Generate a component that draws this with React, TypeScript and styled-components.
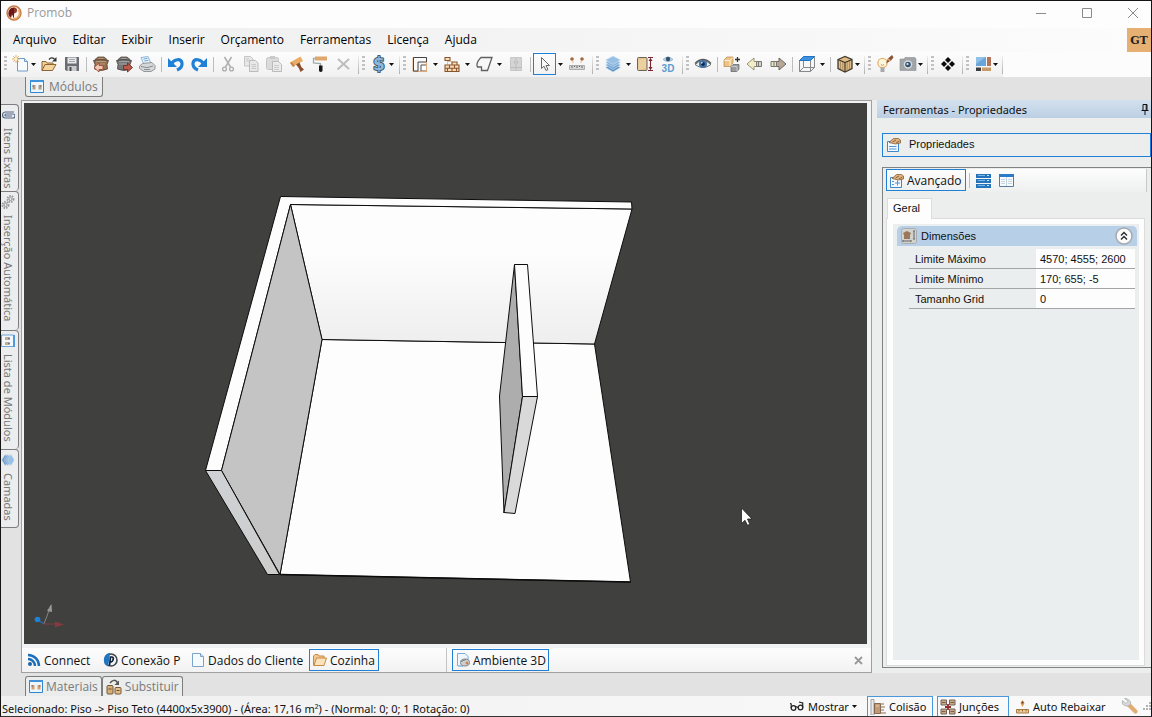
import React from "react";
import styled, { createGlobalStyle, css } from "styled-components";

const GlobalStyle = createGlobalStyle`
  * { box-sizing: border-box; }
  body { margin: 0; background: #e2e2e2; }
  body, button, input { font-family: "Open Sans", "Noto Sans", sans-serif; font-size: 12px; color: #111; }
  button { margin: 0; padding: 0; border: 0; background: none; white-space: nowrap; }
  svg { display: block; flex: none; }
`;

const BLUE = "#1f80d6";

const Window = styled.div`
  display: flex;
  flex-direction: column;
  min-height: 100vh;
  border: 1px solid #141414;
  border-bottom-color: #333;
  background: #e2e2e2;
`;

const TitleBar = styled.header`
  display: flex;
  align-items: center;
  height: 27px;
  padding: 0 8px 4px 5px;
  background: #fdfdfd;
`;
const Title = styled.h1`
  flex: 1;
  margin: 0 0 0 5px;
  font-size: 12px;
  font-weight: 400;
  color: #9a9a9a;
`;
const WindowButtons = styled.div`
  display: flex;
  gap: 26px;
`;
const WindowButton = styled.button`
  display: flex;
  align-items: center;
  justify-content: center;
  width: 20px;
  height: 20px;
`;

const MenuBar = styled.nav`
  display: flex;
  height: 24px;
  padding-left: 4px;
  background: linear-gradient(90deg, #eeefef, #f3f3f3 40%, #fcfcfc);
`;
const MenuItem = styled.button`
  padding: 0 8px;
  line-height: 24px;
  color: #000;
`;
const Badge = styled.button`
  width: 24px;
  margin-left: auto;
  background: #e6b073;
  font-family: "DejaVu Serif", serif;
  font-size: 11px;
  font-weight: 700;
  color: #222;
`;

const ToolBar = styled.div`
  display: flex;
  height: 25px;
  background: #fcfcfc;
`;
const ToolGroup = styled.div<{ $tight?: boolean }>`
  position: relative;
  display: flex;
  align-items: flex-start;
  padding: 1px ${(p) => (p.$tight ? 4 : 5)}px 0 0;
  background: linear-gradient(#fdfdfd, #f0f0f0);
  &::after {
    content: "";
    position: absolute;
    right: 0;
    top: 4px;
    bottom: 3px;
    width: 1px;
    background: linear-gradient(#eee, #b0b0b0);
  }
`;
const Grip = styled.span`
  width: 3px;
  height: 15px;
  margin: 3px 2px 0 3px;
  background: repeating-linear-gradient(#c0c0c0 0 2px, transparent 2px 4px);
`;
const ToolButton = styled.button<{ $active?: boolean; $faded?: boolean }>`
  display: flex;
  align-items: center;
  justify-content: center;
  width: 23px;
  height: 22px;
  opacity: ${(p) => (p.$faded ? 0.75 : 1)};
  ${(p) => p.$active && css`box-shadow: inset 0 0 0 1px ${BLUE};`}
`;
const DropButton = styled.button<{ $overlap?: boolean }>`
  display: flex;
  align-items: center;
  justify-content: center;
  width: ${(p) => (p.$overlap ? 8 : 9)}px;
  height: 22px;
  margin-left: ${(p) => (p.$overlap ? -3 : 0)}px;
`;
const Divider = styled.span`
  width: 1px;
  height: 15px;
  margin: 4px 2px 0 3px;
  background: #bdbdbd;
`;

const TabStrip = styled.div<{ $bottom?: boolean }>`
  display: flex;
  height: 23px;
  padding: ${(p) => (p.$bottom ? "3px 0 0 24px" : "0 0 3px 24px")};
`;
const EdgeTab = styled.button<{ $bottom?: boolean }>`
  display: flex;
  align-items: center;
  gap: ${(p) => (p.$bottom ? 3 : 5)}px;
  height: 20px;
  padding: 0 ${(p) => (p.$bottom ? 3 : 4)}px;
  border: 1px solid #7d7d7d;
  background: #ebecec;
  color: #7a7a7a;
  ${(p) =>
    p.$bottom
      ? css`border-bottom: 0; border-radius: 3px 3px 0 0;`
      : css`border-top: 0; border-radius: 0 0 3px 3px;`}
`;

const Body = styled.div`
  display: flex;
  flex: 1;
  min-height: 0;
`;
const SideTabs = styled.div`
  width: 20px;
  padding-top: 4px;
`;
const SideTab = styled.button<{ $length: number }>`
  display: flex;
  align-items: center;
  gap: 6px;
  writing-mode: vertical-rl;
  width: 18px;
  height: ${(p) => p.$length}px;
  padding: 3px 3px 3px 0;
  border: 1px solid #7d7d7d;
  border-left: 0;
  border-bottom-width: 0;
  border-radius: 0 4px 4px 0;
  background: #ecedee;
  font-family: "Noto Sans", sans-serif;
  font-size: 11px;
  line-height: 14px;
  color: #777;
  &:last-child { border-bottom-width: 1px; }
`;

const Workspace = styled.main`
  display: flex;
  flex: 1;
  flex-direction: column;
  min-width: 0;
  border: 1px solid #a0a0a2;
  background: #f1f2f3;
  padding: 2px 4px 0 2px;
`;
const Viewport = styled.div`
  flex: 1;
  min-height: 0;
  overflow: hidden;
  background: #40403e;
  & > svg { width: 100%; height: 100%; }
`;
const ViewBar = styled.div`
  display: flex;
  height: 24px;
  margin: 4px -4px 0 -2px;
  background: linear-gradient(#fdfdfd, #f2f2f2);
`;
const ViewGroup = styled.div<{ $grow?: boolean }>`
  display: flex;
  align-items: center;
  flex: ${(p) => (p.$grow ? "1" : "0 0 425px")};
  padding: 0 4px 0 5px;
  border-right: 1px solid ${(p) => (p.$grow ? "transparent" : "#c4c4c4")};
`;
const ViewButton = styled.button<{ $active?: boolean; $width: number }>`
  display: flex;
  align-items: center;
  gap: 3px;
  width: ${(p) => p.$width}px;
  height: 22px;
  padding-left: ${(p) => (p.$active ? 3 : 0)}px;
  border: ${(p) => (p.$active ? `1px solid ${BLUE}` : "0")};
`;
const CloseView = styled.button`
  margin-left: auto;
  padding: 4px 3px;
`;

const Panel = styled.aside`
  display: flex;
  flex-direction: column;
  width: 279px;
  padding: 0 0 5px 5px;
  background: #eceeee;
  & button, & input, & label, & h3 { font-family: "Liberation Sans", sans-serif; font-size: 11px; }
`;
const PanelHeader = styled.div`
  display: flex;
  align-items: center;
  justify-content: space-between;
  height: 18px;
  padding: 0 2px 0 6px;
  background: linear-gradient(#d3e1ee, #bccfe3);
`;
const PanelTitle = styled.h2`
  margin: 0;
  font-family: "Noto Sans", sans-serif;
  font-size: 11px;
  font-weight: 400;
`;
const PropertiesButton = styled.button`
  display: flex;
  align-items: center;
  gap: 8px;
  height: 24px;
  margin: 15px 0 10px 5px;
  padding: 0 3px 2px;
  border: 1px solid ${BLUE};
`;
const PropertyBox = styled.section`
  display: flex;
  flex: 1;
  flex-direction: column;
  margin-left: 5px;
  padding: 1px 4px 1px 3px;
  border: 1px solid #828282;
  border-right: 0;
`;
const PropertyTools = styled.div`
  display: flex;
  height: 23px;
  border-right: 1px solid #c8c8c8;
  background: linear-gradient(#fdfdfd, #eeefef);
`;
const AdvancedButton = styled.button`
  display: flex;
  align-items: center;
  gap: 3px;
  width: 80px;
  height: 22px;
  padding-left: 2px;
  border: 1px solid ${BLUE};
  && { font-family: "Open Sans", "Noto Sans", sans-serif; font-size: 12px; }
`;
const PageTab = styled.button`
  position: relative;
  align-self: flex-start;
  width: 45px;
  height: 21px;
  margin: 6px 0 -1px 1px;
  border: 1px solid #dcdcdc;
  border-bottom: 0;
  background: #fdfdfd;
  padding: 0 6px 2px 0;
`;
const Page = styled.div`
  flex: 1;
  margin-right: 2px;
  padding: 5px 5px 5px 6px;
  border: 1px solid #dcdcdc;
  background: #fdfdfd;
  & > div { height: 100%; padding: 2px 2px 0 4px; background: #ebeeee; }
`;
const SectionHeader = styled.div`
  display: flex;
  align-items: center;
  gap: 4px;
  height: 20px;
  padding: 0 4px;
  border-radius: 5px 5px 0 0;
  background: #b8cfe8;
`;
const SectionTitle = styled.h3`
  flex: 1;
  margin: 0;
  font-weight: 400;
`;
const PropertyRow = styled.div`
  display: flex;
  align-items: center;
  height: 20px;
  margin: 0 2px 0 12px;
  padding-left: 6px;
  border-bottom: 1px solid #a3a5a5;
  & label { flex: 1; }
`;
const PropertyInput = styled.input`
  width: 99px;
  height: 19px;
  padding: 0 4px;
  border: 0;
  background: #fdfdfd;
`;
const Rows = styled.div`
  padding-top: 3px;
`;

const StatusBar = styled.footer`
  display: flex;
  align-items: center;
  height: 20px;
  background: linear-gradient(90deg, #f0f0f0, #fafafa);
`;
const StatusText = styled.div`
  flex: 1;
  font-family: "Noto Sans", sans-serif;
  font-size: 11px;
  padding: 4px 0 0 1px;
  white-space: nowrap;
`;
const StatusButton = styled.button<{ $active?: boolean; $width: number }>`
  display: flex;
  align-items: center;
  gap: 3px;
  width: ${(p) => p.$width}px;
  height: 20px;
  margin-right: 4px;
  padding-left: 2px;
  font-family: "Noto Sans", sans-serif;
  font-size: 11px;
  ${(p) => p.$active && css`border: 1px solid #4a98dc; border-bottom: 0;`}
`;

const Ico = ({ children, size = 18, h }: { children: React.ReactNode; size?: number; h?: number }) => (
  <svg width={size} height={h ?? size} viewBox={`0 0 ${size} ${h ?? size}`} fill="none" aria-hidden="true">
    {children}
  </svg>
);

const Arrow = () => (
  <Ico size={5} h={3}><path d="M0 0h5L2.500 3z" fill="#111" /></Ico>
);

const Logo = () => (
  <Ico size={16}>
    <circle cx="8" cy="8" r="6.900" fill="#fff4e8" stroke="#c77b45" strokeWidth="1.500" />
    <path d="M8.500 2.500A5.600 5.600 0 0 0 5 12.800q.5-1.500 1-3.500L8 14V9z" fill="#6b1717" />
    <path d="M8 2.500q3 0 3 2.800T8 8.500z" fill="#8b3a2c" />
    <path d="M8 13.800a5.700 5.700 0 0 0 4.500-9" stroke="#e5a76a" strokeWidth="1.600" />
  </Ico>
);

const NewIcon = () => (
  <Ico>
    <path d="M5.500 3.500h7l3 3v9.500h-10z" fill="#f8fbfe" stroke="#6f9cc6" />
    <path d="M12.500 3.500v3h3" stroke="#6f9cc6" fill="#d8e8f6" />
    <path d="M4 0v8M0 4h8M1.200 1.200l5.600 5.600M6.800 1.200L1.200 6.800" stroke="#e0a95c" strokeWidth=".900" />
    <circle cx="4" cy="4" r="1.500" fill="#fff3cd" />
  </Ico>
);
const OpenIcon = () => (
  <Ico>
    <path d="M2 15.500V6.500h4l1 1.500h6v2" fill="#f3cf98" stroke="#8c6535" />
    <path d="M2 15.500l3-6h11l-3.500 6z" fill="#f6d39c" stroke="#8c6535" />
    <path d="M9 4.500q2.500-3 5.500-.5" stroke="#333" strokeWidth="1.300" />
    <path d="M16.500 2v4.500H12z" fill="#333" />
  </Ico>
);
const SaveIcon = () => (
  <Ico>
    <path d="M2 2h14v14H3.500L2 14.500z" fill="#6a6e72" />
    <path d="M4.500 2.500h9v6h-9z" fill="#e9ebec" />
    <path d="M6 4.500h6M6 6.500h6" stroke="#a0a4a7" />
    <path d="M4.500 11h9v5h-9z" fill="#c7cbce" />
    <path d="M6.500 12h2v4h-2z" fill="#4b4e51" />
  </Ico>
);
const ModuleIcon = ({ base, right }: { base: string; right?: boolean }) => (
  <Ico>
    <path d="M3 4.500l3-2.500h6l3 2.500v3H3z" fill={base} stroke="#4c3a2c" strokeWidth=".700" />
    <path d="M1.500 5.500q7.500-2 15 0l-1.500 4 .5 4.500q-6.500 3-13 0L3 9.500z" fill={base} stroke="#4a4038" strokeWidth=".800" />
    <path d="M4 6.500h10M6.500 3.500h5M4 9h9" stroke="#fff" strokeOpacity=".3" />
    <path d={right ? "M8.500 10.500h4V8l5 4.500-5 4.500v-2.500h-4z" : "M11 10.500H7V8L2 12.500 7 17v-2.500h4z"} fill={right ? "#b85a4c" : "#f1c9b3"} stroke={right ? "#7b2a22" : "#a04a38"} strokeWidth=".900" />
  </Ico>
);
const PrintIcon = () => (
  <Ico>
    <path d="M3 2.500l7-1 3 7-7 1z" fill="#e9f3fc" stroke="#8eb8da" />
    <path d="M5.500 4l4-.6M6.300 6l4-.6" stroke="#6ea7d7" />
    <path d="M1.500 11l3-2.500 9.500-1 3 3v3.500l-4 2.500h-7l-4.500-3z" fill="#d5d7d9" stroke="#94979a" />
    <path d="M3 11.500q6 2.500 12-.5M6 14.500h6" stroke="#8b8e91" />
  </Ico>
);
const UndoIcon = ({ flip }: { flip?: boolean }) => (
  <Ico>
    <g transform={flip ? "translate(18 0) scale(-1 1)" : undefined}>
      <path d="M4.500 9C7 4 14 3 15 8c.5 3-1.500 5.500-5 7" stroke="#1f80d6" strokeWidth="3.200" />
      <path d="M1 3v9h9z" fill="#1f80d6" />
    </g>
  </Ico>
);
const CutIcon = () => (
  <Ico>
    <path d="M5.500 2l6 10M12.500 2l-6 10" stroke="#b0b0b0" strokeWidth="1.600" />
    <circle cx="5.500" cy="14" r="1.900" stroke="#ababab" strokeWidth="1.300" />
    <circle cx="12.500" cy="14" r="1.900" stroke="#ababab" strokeWidth="1.300" />
  </Ico>
);
const CopyIcon = () => (
  <Ico>
    <path d="M2.500 1.500h6l2.500 2.500v7H2.500z" fill="#e3e3e3" stroke="#b4b4b4" />
    <path d="M7.500 5.500h6L16 8v8.500H7.500z" fill="#e3e3e3" stroke="#a8a8a8" />
    <path d="M9.500 9.500h4.500M9.500 11.500h4.500M9.500 13.500h4.500M4 4h3M4 6h3" stroke="#b9b9b9" />
  </Ico>
);
const PasteIcon = () => (
  <Ico>
    <rect x="1.500" y="2.500" width="12" height="12" rx="2" fill="#d2d2d2" stroke="#b4b4b4" />
    <path d="M5 1h5v3H5z" fill="#bbb" />
    <path d="M7.500 6.500h6l3 3v7h-9z" fill="#e8e8e8" stroke="#a8a8a8" />
    <path d="M9 10.500h5M9 12.500h5M9 14.500h5" stroke="#bdbdbd" />
  </Ico>
);
const HammerIcon = () => (
  <Ico>
    <path d="M2 7.500L12.500 1.500l2.500 4.500-10 5.500z" fill="#e9ad66" />
    <path d="M2 8l3 4 2-1-3-4z" fill="#c98646" />
    <path d="M8 9.500l3.500-2q1 4.500 4.500 7l-3.500 2.500q-1-4-4.500-7.500z" fill="#8b4d2e" />
  </Ico>
);
const RollerIcon = () => (
  <Ico>
    <path d="M4 1.500h12v4H4z" fill="#e0a76c" />
    <path d="M4 3.500H2.500V8l7 .5v3" stroke="#9aabb0" strokeWidth="1.300" />
    <path d="M8 10.500h3.500V16q-1.700 2-3.500 0z" fill="#161616" />
  </Ico>
);
const DeleteIcon = () => (
  <Ico><path d="M4 4l11 10M3.500 14.500L15 4" stroke="#bbb" strokeWidth="1.800" /></Ico>
);
const DollarIcon = () => (
  <svg width="20" height="18" viewBox="0 0 18 18" aria-hidden="true">
    <text x="9" y="15" textAnchor="middle" fontFamily="DejaVu Sans, sans-serif" fontWeight="700" fontSize="17" fill="#8db8d9" stroke="#435766" strokeWidth="2" strokeLinejoin="round" paintOrder="stroke">$</text>
  </svg>
);
const WallIcon = () => (
  <Ico>
    <path d="M2 2.500h13.500v14H2z" stroke="#e2a979" />
    <path d="M2.500 2.500h13v4.500H7v9H2.500z" stroke="#444" fill="#fafafa" />
    <path d="M10 10h5.500v6H10z" fill="#fff" stroke="#555" />
    <path d="M7 16.500h8.500V7" stroke="#e2a979" />
  </Ico>
);
const BrickIcon = () => (
  <Ico>
    <path d="M2 2.500h5v3H2zM2 10h14v6.500H2zM2 13.200h14M6.500 10v3M11.500 10v3M4.500 13v3.500M9 13v3.500M13.500 13v3.500M9 7h5v3H9z" fill="#f6dcb8" stroke="#8a552e" strokeWidth="1.100" />
    <path d="M4.500 6.500h4.500v3.500h-4.500z" stroke="#b88b5e" strokeDasharray="1 1" />
  </Ico>
);
const PolygonIcon = () => (
  <Ico><path d="M6 2.500h11l-4.500 13H6.500v-3.500H2.500q-2-4 3.500-9.500z" fill="#f7f7f7" stroke="#606060" strokeWidth="1.300" /></Ico>
);
const CabinetIcon = () => (
  <Ico>
    <path d="M3.500 2.500h11v13h-11z" fill="#c9c9c9" stroke="#b8b8b8" />
    <path d="M9 2.500v13M3.500 12.500h11M7.500 6v2.500M10.500 6v2.500" stroke="#aaa" />
  </Ico>
);
const PointerIcon = () => (
  <Ico><path d="M5.500 2.500v11l2.500-2.300 2 4.300 2-1-2-4h3.500z" fill="#f9f9f9" stroke="#666" /></Ico>
);
const MeasureIcon = () => (
  <Ico>
    <path d="M1.500 10.500h15v4h-15z" fill="#d6d6d6" stroke="#acacac" />
    <path d="M4 11v2M6.500 11v1M9 11v2M11.500 11v1M14 11v2" stroke="#666" />
    <circle cx="4" cy="4" r="1.800" fill="#a2683d" /><circle cx="14" cy="4" r="1.800" fill="#a2683d" />
    <path d="M5.500 7H4M14 7h-1.500" stroke="#d9a66b" />
  </Ico>
);
const LayersIcon = ({ size = 18, sideways }: { size?: number; sideways?: boolean }) => (
  <svg width={size} height={size} viewBox="0 0 18 18" aria-hidden="true">
    <g transform={sideways ? "rotate(90 9 9)" : undefined}>
      {[12.500, 10, 7.500, 5].map((y, i) => (
        <path key={y} d={`M9 ${y - 4}l7.500 4-7.500 4.500-7.500-4.500z`} fill={["#5d93c6", "#74a5d3", "#88b5dc", "#97c0e4"][i]} stroke="#d4e5f4" strokeWidth=".600" />
      ))}
    </g>
  </svg>
);
const HeightIcon = () => (
  <Ico>
    <rect x="1.500" y="2.500" width="9.500" height="13" rx="1" fill="#e6c393" stroke="#68645c" />
    <path d="M2.500 5l7.500-1.500V13l-7.500 2z" fill="#f0d9a7" fillOpacity=".6" />
    <path d="M12 2.500h5M12 15.500h5M14.500 3.500v11" stroke="#7d2632" strokeWidth="1.100" />
    <path d="M14.500 3l2 3h-4zM14.500 15l2-3h-4z" fill="#7d2632" />
  </Ico>
);
const Eye3DIcon = () => (
  <svg width="18" height="18" viewBox="0 0 18 18" aria-hidden="true">
    <path d="M4 4.500Q9-.5 14 4.500 9 8.500 4 4.500z" fill="#bfd5e6" stroke="#7fa3be" strokeWidth=".700" />
    <circle cx="9" cy="4" r="2.200" fill="#33546f" />
    <text x="9" y="17" textAnchor="middle" fontFamily="Liberation Sans, sans-serif" fontWeight="700" fontSize="10" fill="#5f9ccf">3D</text>
  </svg>
);
const EyeIcon = () => (
  <Ico>
    <path d="M1 9.500Q9 2 17 9.500 9 15.500 1 9.500z" fill="#eef1f3" stroke="#6b747c" />
    <path d="M1 8.500Q9 .5 17 8.500" stroke="#5a5a5a" strokeWidth="1.400" />
    <circle cx="9" cy="9" r="4" fill="#3f72a8" /><circle cx="9" cy="9" r="1.800" fill="#142133" />
    <circle cx="7.800" cy="7.800" r=".900" fill="#cfe2f2" />
  </Ico>
);
const CopyBoxIcon = () => (
  <Ico>
    <path d="M1 5l3-3h6v6l-2 1.500-.5 2H1z" fill="#edc386" stroke="#b88746" strokeWidth=".700" />
    <path d="M1.500 5.500h5.500V11M7 5.500l3-3" stroke="#fff3da" />
    <path d="M8 11.500l2-2h6v4.500L14 16.500H8z" fill="#9a9b9d" stroke="#5f6062" strokeWidth=".700" />
    <path d="M8.500 11.500h5.500v5" stroke="#c8c9ca" />
    <path d="M14.500 2v5M12 4.500h5" stroke="#333" strokeWidth="1.300" />
  </Ico>
);
const BackIcon = () => (
  <Ico>
    <path d="M1 9l7-6v3.500h3v5H8V15z" fill="#f3efca" stroke="#9b9472" />
    <path d="M10.500 6.500h5v5h-5z" fill="#d9d3bd" stroke="#777" /><path d="M12.500 7v4" stroke="#777" />
  </Ico>
);
const ForwardIcon = () => (
  <Ico>
    <path d="M17 9l-7-6v3.500H7v5h3V15z" fill="#b9a796" stroke="#6f655e" />
    <path d="M2 6.500h5.500v5H2z" fill="#e8e5b9" stroke="#777" /><path d="M5 7v4" stroke="#777" />
  </Ico>
);
const FrameIcon = () => (
  <Ico>
    <path d="M1.500 5.500h11v11h-11zM12.500 5.500l4-4v11l-4 4M5.500 2v10.500h11M5.500 12.500l-4 4" stroke="#85898c" />
    <path d="M1.500 5.500l4-4h11l-4 4z" fill="#3f93de" stroke="#2175c4" />
  </Ico>
);
const CrateIcon = () => (
  <Ico>
    <path d="M2 4.500L9 1.500l7 3v9l-7 3.500-7-3.500z" fill="#e0bd88" stroke="#423a2e" strokeWidth="1.300" />
    <path d="M2 4.500l7 3 7-3M9 7.500V17" stroke="#423a2e" strokeWidth="1.200" />
    <path d="M4.500 6v8M6.800 7v8.500M11.200 7v8.500M13.500 6v8" stroke="#a08250" strokeWidth=".800" />
  </Ico>
);
const BulbIcon = () => (
  <Ico>
    <circle cx="6.500" cy="8" r="4.600" fill="#fff7dd" stroke="#e4b472" strokeWidth="1.300" />
    <path d="M4.500 12.500h4V17h-4z" fill="#a6aaad" /><path d="M5 9l1.500 2L8 9" stroke="#dba75c" />
    <path d="M10 8.500l2-5 4-3.500 1.500 2.500-2.500 3z" fill="#8a5335" />
    <path d="M12 4l2.500 2" stroke="#e2ad75" strokeWidth="1.500" />
  </Ico>
);
const CameraIcon = () => (
  <Ico>
    <path d="M1 4h4l1-1.500h10L17 4v11.500H1z" fill="#a2a5a8" stroke="#8e9194" strokeWidth=".600" />
    <circle cx="9" cy="9.500" r="4.200" fill="#d7dde1" /><circle cx="9" cy="9.500" r="2.800" fill="#35536f" />
    <circle cx="8.500" cy="9" r="1.100" fill="#dcebf5" />
  </Ico>
);
const DiamondsIcon = () => (
  <Ico>
    {[[9, 5], [5, 9], [13, 9], [9, 13]].map(([x, y]) => (
      <path key={`${x}-${y}`} d={`M${x} ${y - 3}l3 3-3 3-3-3z`} fill="#0a0a0a" />
    ))}
  </Ico>
);
const SwatchIcon = () => (
  <Ico>
    <path d="M2 2h10v9H2z" fill="#69a5d8" /><path d="M2 2h10L2 9z" fill="#8fc0e6" />
    <path d="M13 2h4v9h-4z" fill="#b5745a" /><path d="M2 12.500h5V16H2z" fill="#3d3d3d" /><path d="M8 12.500h9V16H8z" fill="#c99a68" />
  </Ico>
);

const ModulesTabIcon = ({ tint = "#a08868" }: { tint?: string }) => (
  <Ico size={14} h={13}>
    <path d="M.5 .5h13v12H.500z" fill="#eef5fb" stroke="#2c86d3" /><path d="M0 0h14v2H0z" fill="#3f92da" />
    <path d="M2.500 5h3v4.500h-3zM8.500 5h3v4.500h-3z" fill={tint} fillOpacity=".8" /><path d="M2.500 6h1.500M10 6h1.500" stroke="#667" />
  </Ico>
);
const ReplaceIcon = () => (
  <Ico size={16}>
    <rect x="1" y="6.500" width="6" height="8.500" rx="1" fill="#d6ae77" stroke="#73583a" />
    <rect x="9" y="8.500" width="6" height="6.500" rx="1" fill="#e3bd86" stroke="#73583a" />
    <path d="M2.500 10h3M10.500 11.500h3" stroke="#6a4c2d" /><path d="M4 4q4-5 7.500-.5" stroke="#555" strokeWidth="1.500" /><path d="M13 1.500V6H8.500z" fill="#555" />
  </Ico>
);
const ClipIcon = () => (
  <Ico size={14}>
    <path d="M13 4H4.500a2.600 2.600 0 0 0 0 6H12a1.500 1.500 0 0 0 0-4H5a1 1 0 0 0 0 2h6" stroke="#536783" strokeWidth="1.200" />
  </Ico>
);
const GearsIcon = () => (
  <Ico size={14}>
    <circle cx="9.500" cy="4" r="3" stroke="#9a9a9a" strokeWidth="2" strokeDasharray="1.500 1" /><circle cx="9.500" cy="4" r="1.500" stroke="#999" />
    <circle cx="4.500" cy="10" r="3" stroke="#9a9a9a" strokeWidth="2" strokeDasharray="1.500 1" /><circle cx="4.500" cy="10" r="1.500" stroke="#999" />
  </Ico>
);
const ListIcon = () => (
  <Ico size={14}>
    <path d="M.5 1h12v11.500H.500z" fill="#f2f7fb" stroke="#6ea6d6" /><path d="M12 1h2v12h-2z" fill="#4f9add" />
    <path d="M4 3h3.500v3H4zM4 8h3.500v3H4z" fill="#c5ad8e" /><path d="M8 3.500v2M8 8.500v2" stroke="#556" strokeWidth="1.500" />
  </Ico>
);
const RssIcon = () => (
  <Ico size={14}>
    <circle cx="3" cy="11" r="2" fill="#1765ad" />
    <path d="M1 6a7 7 0 0 1 7 7M1 2a11 11 0 0 1 11 11" stroke="#1b6fbd" strokeWidth="2.500" />
  </Ico>
);
const ConnectPIcon = () => (
  <Ico size={16}>
    <circle cx="9" cy="8" r="6" stroke="#40474e" strokeWidth="1.600" fill="#f7f7f7" />
    <path d="M8 .8a7.300 7.300 0 0 0-2 13.800L7 9z" fill="#1d75c3" />
    <path d="M7.500 13.500l1-8.500h1.500q2 .5 1 3t-2.500 1.500" stroke="#14243a" strokeWidth="1.700" />
  </Ico>
);
const DocIcon = () => (
  <Ico size={14}><path d="M1.500 .5h8l3 3v10h-11z" fill="#f5faff" stroke="#7ba4cc" /><path d="M9.500 .5v3h3" stroke="#7ba4cc" fill="#cfe2f4" /></Ico>
);
const FolderIcon = () => (
  <Ico size={14}>
    <path d="M.5 12.500V3L2 1.500h3L6 3h5v2" fill="#f4c991" stroke="#c98942" />
    <path d="M1 12.500L3.500 5h10L11 12.500z" fill="#fbe3bb" stroke="#c98942" />
  </Ico>
);
const AmbientIcon = () => (
  <Ico size={14}>
    <path d="M1.500 13V.5H9l3 3V8" fill="#eef6fe" stroke="#7eabd6" /><path d="M2 13h5" stroke="#4f94d2" />
    <ellipse cx="9" cy="9.500" rx="4.500" ry="3.500" fill="#cdd0d2" stroke="#85898c" /><circle cx="11" cy="10" r="1.500" fill="#c98550" />
    <path d="M5 8.500l5-2" stroke="#7d8184" />
  </Ico>
);
const HandFormIcon = ({ plus }: { plus?: boolean }) => (
  <Ico size={15}>
    <path d="M1.500 4.500h11v10h-11z" fill="#f4f9fd" stroke="#3b88cc" />
    <path d={plus ? "M3 8.500h2M3 11.500h2M8.500 7.500v5M6 10h5" : "M3 9.500h7.500M3 12h7.500"} stroke="#4c94d4" />
    <path d="M3 5.500l4.500-4h5l2 1.500v3L9.500 7z" fill="#e0b27c" stroke="#7b522f" strokeWidth=".700" />
    <path d="M6.500 5l3.500-2M10 6l3.500-2" stroke="#8a6440" />
  </Ico>
);
const StackIcon = () => (
  <Ico size={15}>
    {[1, 6, 11].map((y) => (
      <g key={y}><path d={`M0 ${y}h15v4H0z`} fill="#2473bd" /><path d={`M2 ${y + 1.500}h7`} stroke="#7db5e4" /><path d={`M11 ${y + 1.500}h2`} stroke="#cfe5f8" /></g>
    ))}
  </Ico>
);
const GridIcon = () => (
  <Ico size={15}>
    <path d="M.5 1.500h14v12H.500z" fill="#f7fafd" stroke="#5b7d9c" /><path d="M0 1h15v3H0z" fill="#2a7cc8" />
    <path d="M7.500 4v9" stroke="#c3d3e0" /><path d="M2 6.500h4M2 8.500h4M2 10.500h4M9 6.500h4M9 8.500h4M9 10.500h4" stroke="#c7d6e2" />
  </Ico>
);
const DimensionIcon = () => (
  <Ico size={16}>
    <rect x=".5" y=".5" width="15" height="15" rx="2" fill="#d2d2ce" stroke="#a9adb0" />
    <path d="M2 5l4-2 4 2-1 2H3zM3 7h6v4H3z" fill="#9a7859" /><path d="M2 13h8M2 12v2M10 12v2M13 3v8M12 3h2M12 11h2" stroke="#666" />
  </Ico>
);
const CollapseIcon = () => (
  <Ico size={18}>
    <circle cx="9" cy="9" r="8" fill="#fbfbfb" stroke="#a5a9ad" strokeWidth="1.500" />
    <path d="M6 8.500l3-3 3 3M6 12.500l3-3 3 3" stroke="#262626" strokeWidth="1.300" />
  </Ico>
);
const PinIcon = () => (
  <Ico size={8} h={11}><path d="M2 .5h4v6H2zM5.200 1v5M.5 6.500h7M4 7v4" stroke="#111" /></Ico>
);
const GlassesIcon = () => (
  <Ico size={16} h={12}>
    <circle cx="4.500" cy="8" r="2.300" stroke="#222" strokeWidth="1.300" /><circle cx="11.500" cy="7.500" r="2.300" stroke="#222" strokeWidth="1.300" />
    <path d="M6.500 7.500q1-1.500 2.700 0M2.200 8V4L1 3.500M13.700 7.500V3L10 2" stroke="#222" strokeWidth="1.200" />
  </Ico>
);
const CollisionIcon = () => (
  <Ico size={16}>
    <path d="M1 .5h3V16H1z" fill="#e9e9e9" stroke="#a0a1a2" /><path d="M4.500 4.500h6V14.500h-6z" fill="#c39a74" stroke="#705139" strokeWidth=".800" />
    <path d="M11 5h3M11 8h4M11 11h3M11 14h5" stroke="#8f6c50" /><path d="M6 7h3" stroke="#ead1b4" />
  </Ico>
);
const JunctionIcon = () => (
  <Ico size={16}>
    <path d="M1 1h5.500v5H1zM9.500 1H15v5H9.500zM1 10h5.500v5H1zM9.500 10H15v5H9.500z" fill="#c8a988" stroke="#75645a" />
    <path d="M2 3.500h3.500M10.500 3.500H14M2 12.500h3.500M10.500 12.500H14" stroke="#7b5d49" /><path d="M8 5v6M5 8h6" stroke="#8f2c2c" strokeWidth="1.800" />
  </Ico>
);
const LowerIcon = () => (
  <Ico size={15}>
    <path d="M5.500 4l2-3 2 3-2 4z" fill="#d89650" /><circle cx="7.500" cy="3.500" r="1" fill="#6c3a1c" />
    <path d="M1.500 10.500h12v3.500h-12z" fill="#eccb9b" stroke="#a77a42" /><path d="M4 11v1.500M7.500 11v1.500M11 11v1.500" stroke="#99683a" />
  </Ico>
);
const WrenchIcon = () => (
  <Ico size={18}>
    <path d="M8 8l6.500 6.500" stroke="#e2ad72" strokeWidth="4.200" strokeLinecap="round" />
    <path d="M3.500 1.500L7 4.500 5 6.500 1.500 3.500Q0 7 3.500 8.500T9 8 8.500 3.500 3.500 1.500z" fill="#d7d9da" stroke="#a4a6a8" strokeWidth=".700" />
  </Ico>
);
const ResizeIcon = () => (
  <Ico size={8}>
    <path d="M6 0h2v2H6zM3 3h2v2H3zM6 3h2v2H6zM0 6h2v2H0zM3 6h2v2H3zM6 6h2v2H6z" fill="#b3b3b3" />
  </Ico>
);

type Kind = "plain" | "near" | "split" | "active-split";
type Tool = { label: string; icon: React.ReactNode; kind?: Kind; faded?: boolean } | "divider";

const toolGroups: Tool[][] = [
  [
    { label: "Novo", icon: <NewIcon />, kind: "near" },
    { label: "Abrir", icon: <OpenIcon /> },
    { label: "Salvar", icon: <SaveIcon /> },
    "divider",
    { label: "Importar módulo", icon: <ModuleIcon base="#97704c" /> },
    { label: "Exportar módulo", icon: <ModuleIcon base="#77787a" right /> },
    { label: "Imprimir", icon: <PrintIcon /> },
    "divider",
    { label: "Desfazer", icon: <UndoIcon /> },
    { label: "Refazer", icon: <UndoIcon flip /> },
    "divider",
    { label: "Recortar", icon: <CutIcon /> },
    { label: "Copiar", icon: <CopyIcon />, faded: true },
    { label: "Colar", icon: <PasteIcon />, faded: true },
    { label: "Martelo", icon: <HammerIcon /> },
    { label: "Pintar", icon: <RollerIcon /> },
    { label: "Excluir", icon: <DeleteIcon /> },
  ],
  [{ label: "Preço", icon: <DollarIcon />, kind: "near" }],
  [
    { label: "Parede", icon: <WallIcon />, kind: "split" },
    { label: "Alvenaria", icon: <BrickIcon />, kind: "split" },
    { label: "Polígono", icon: <PolygonIcon />, kind: "split" },
    { label: "Armário", icon: <CabinetIcon />, faded: true },
    "divider",
    { label: "Selecionar", icon: <PointerIcon />, kind: "active-split" },
    { label: "Cotas", icon: <MeasureIcon /> },
  ],
  [
    { label: "Camadas", icon: <LayersIcon />, kind: "split" },
    { label: "Altura", icon: <HeightIcon /> },
    { label: "Visão 3D", icon: <Eye3DIcon /> },
  ],
  [
    { label: "Visualizar", icon: <EyeIcon /> },
    "divider",
    { label: "Duplicar", icon: <CopyBoxIcon /> },
    { label: "Anterior", icon: <BackIcon /> },
    { label: "Próximo", icon: <ForwardIcon /> },
    "divider",
    { label: "Perspectiva", icon: <FrameIcon />, kind: "split" },
    "divider",
    { label: "Textura", icon: <CrateIcon />, kind: "near" },
  ],
  [
    { label: "Iluminação", icon: <BulbIcon /> },
    { label: "Câmera", icon: <CameraIcon />, kind: "near" },
  ],
  [{ label: "Mover", icon: <DiamondsIcon /> }],
  [{ label: "Acabamentos", icon: <SwatchIcon />, kind: "near" }],
];

const ToolItem = ({ tool }: { tool: Tool }) => {
  if (tool === "divider") return <Divider />;
  const kind = tool.kind ?? "plain";
  return (
    <>
      <ToolButton aria-label={tool.label} $active={kind === "active-split"} $faded={tool.faded}>{tool.icon}</ToolButton>
      {kind !== "plain" && (
        <DropButton aria-label={`${tool.label}: opções`} $overlap={kind === "near"}><Arrow /></DropButton>
      )}
    </>
  );
};

const Scene = () => (
  <svg aria-label="Ambiente 3D">
    <defs>
      <linearGradient id="back" x1="0" y1="0" x2="0" y2="1">
        <stop offset=".35" stopColor="#fdfdfd" /><stop offset="1" stopColor="#eeeeee" />
      </linearGradient>
      <linearGradient id="front" x1="0" y1="0" x2="1" y2="1">
        <stop offset="0" stopColor="#cfd1d6" /><stop offset="1" stopColor="#cdcdcb" />
      </linearGradient>
    </defs>
    <g transform="translate(-24 -103)" stroke="#0c0c0c" strokeLinejoin="round">
      <path d="M322 339.500L594.500 344 630.500 582 280 574.500z" fill="#fdfdfd" />
      <path d="M290.500 204.500L632 209 594.500 344 322 339.500z" fill="url(#back)" />
      <path d="M280.500 196.500L631.500 202 632 209 290.500 204.500 221.500 470.500H205.500z" fill="#fdfdfd" />
      <path d="M290.500 204.500L322 339.500 280 574.500 221.500 470.500z" fill="#c4c4c4" />
      <path d="M205.500 470.500h16L279.500 574.500H267.500z" fill="url(#front)" />
      <path d="M280 574.500L630.500 582" strokeWidth="1.500" />
      <path d="M514.500 264.500L522.500 396.500 504 513 499.500 396z" fill="#adadad" />
      <path d="M514.500 264.500h13L537.500 396.500h-15z" fill="#fdfdfd" />
      <path d="M522.500 396.500h15L515 513.500 504 512.500z" fill="#d9d9d9" />
    </g>
    <g transform="translate(-24 -103)" fill="none">
      <path d="M44 624L51 605" stroke="#858585" /><path d="M47 611l4.500-7 .5 8z" fill="#999" />
      <path d="M44 624h12" stroke="#843a3f" /><path d="M55 621.500l9 3-9 3z" fill="#843a3f" />
      <path d="M44 624l-6-4" stroke="#1f80d6" /><circle cx="37.500" cy="619.500" r="2.800" fill="#1f80d6" />
      <path d="M741.500 508v15.500l3.500-3.200 2.500 5 2.300-1-2.300-5.300h4.500z" fill="#fff" stroke="#222" strokeWidth=".800" />
    </g>
  </svg>
);

const menus = ["Arquivo", "Editar", "Exibir", "Inserir", "Orçamento", "Ferramentas", "Licença", "Ajuda"];
const properties = [
  { id: "max", label: "Limite Máximo", value: "4570; 4555; 2600" },
  { id: "min", label: "Limite Mínimo", value: "170; 655; -5" },
  { id: "grid", label: "Tamanho Grid", value: "0" },
];

export default function App() {
  return (
    <>
      <GlobalStyle />
      <Window>
        <TitleBar>
          <Logo />
          <Title>Promob</Title>
          <WindowButtons>
            <WindowButton aria-label="Minimizar"><Ico size={12}><path d="M1 6.500h10" stroke="#8a8a8a" /></Ico></WindowButton>
            <WindowButton aria-label="Maximizar"><Ico size={12}><path d="M1.500 1.500h9v9h-9z" stroke="#8a8a8a" /></Ico></WindowButton>
            <WindowButton aria-label="Fechar"><Ico size={12}><path d="M1 1l10 10M11 1L1 11" stroke="#8a8a8a" /></Ico></WindowButton>
          </WindowButtons>
        </TitleBar>

        <MenuBar>
          {menus.map((m) => <MenuItem key={m}>{m}</MenuItem>)}
          <Badge>GT</Badge>
        </MenuBar>

        <ToolBar>
          {toolGroups.map((group, i) => (
            <ToolGroup key={i} $tight={i > 2}>
              <Grip />
              {group.map((tool, j) => <ToolItem key={j} tool={tool} />)}
            </ToolGroup>
          ))}
        </ToolBar>

        <TabStrip>
          <EdgeTab><ModulesTabIcon />Módulos</EdgeTab>
        </TabStrip>

        <Body>
          <SideTabs>
            <SideTab $length={87}><ClipIcon />Itens Extras</SideTab>
            <SideTab $length={139}><GearsIcon />Inserção Automática</SideTab>
            <SideTab $length={119}><ListIcon />Lista de Módulos</SideTab>
            <SideTab $length={79}><LayersIcon size={14} sideways />Camadas</SideTab>
          </SideTabs>

          <Workspace>
            <Viewport><Scene /></Viewport>
            <ViewBar>
              <ViewGroup>
                <ViewButton $width={75}><RssIcon />Connect</ViewButton>
                <ViewButton $width={89}><ConnectPIcon />Conexão P</ViewButton>
                <ViewButton $width={118}><DocIcon />Dados do Cliente</ViewButton>
                <ViewButton $width={70} $active><FolderIcon />Cozinha</ViewButton>
              </ViewGroup>
              <ViewGroup $grow>
                <ViewButton $width={97} $active><AmbientIcon />Ambiente 3D</ViewButton>
                <CloseView aria-label="Fechar ambiente"><Ico size={9}><path d="M1 1l7 7M8 1L1 8" stroke="#999" strokeWidth="1.800" /></Ico></CloseView>
              </ViewGroup>
            </ViewBar>
          </Workspace>

          <Panel>
            <PanelHeader>
              <PanelTitle>Ferramentas - Propriedades</PanelTitle>
              <PinIcon />
            </PanelHeader>
            <PropertiesButton><HandFormIcon />Propriedades</PropertiesButton>
            <PropertyBox>
              <PropertyTools>
                <AdvancedButton><HandFormIcon plus />Avançado</AdvancedButton>
                <Divider />
                <ToolButton aria-label="Lista"><StackIcon /></ToolButton>
                <ToolButton aria-label="Tabela"><GridIcon /></ToolButton>
              </PropertyTools>
              <PageTab>Geral</PageTab>
              <Page>
                <div>
                  <SectionHeader>
                    <DimensionIcon />
                    <SectionTitle>Dimensões</SectionTitle>
                    <button aria-label="Recolher"><CollapseIcon /></button>
                  </SectionHeader>
                  <Rows>
                    {properties.map((p) => (
                      <PropertyRow key={p.id}>
                        <label htmlFor={p.id}>{p.label}</label>
                        <PropertyInput id={p.id} defaultValue={p.value} />
                      </PropertyRow>
                    ))}
                  </Rows>
                </div>
              </Page>
            </PropertyBox>
          </Panel>
        </Body>

        <TabStrip $bottom>
          <EdgeTab $bottom><ModulesTabIcon tint="#d08a4a" />Materiais</EdgeTab>
          <EdgeTab $bottom><ReplaceIcon />Substituir</EdgeTab>
        </TabStrip>

        <StatusBar>
          <StatusText>Selecionado: Piso -&gt; Piso Teto (4400x5x3900) - (Área: 17,16 m²) - (Normal: 0; 0; 1 Rotação: 0)</StatusText>
          <StatusButton $width={76}><GlassesIcon />Mostrar <Arrow /></StatusButton>
          <StatusButton $width={66} $active><CollisionIcon />Colisão</StatusButton>
          <StatusButton $width={72} $active><JunctionIcon />Junções</StatusButton>
          <StatusButton $width={102}><LowerIcon />Auto Rebaixar</StatusButton>
          <StatusButton $width={20} aria-label="Configurações"><WrenchIcon /></StatusButton>
          <ResizeIcon />
        </StatusBar>
      </Window>
    </>
  );
}
